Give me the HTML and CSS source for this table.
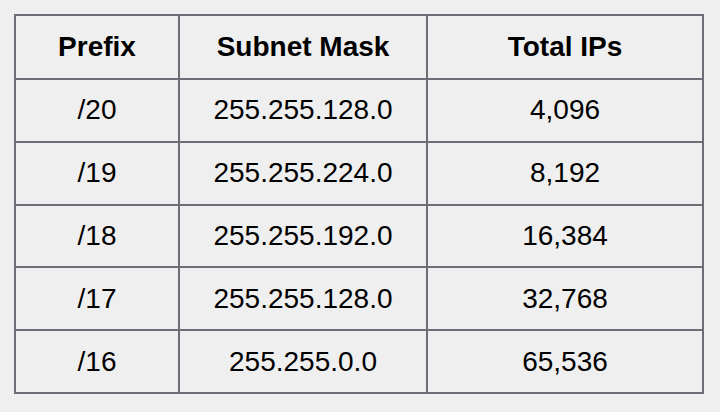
FILE: index.html
```html
<!DOCTYPE html>
<html>
<head>
<meta charset="utf-8">
<link rel="stylesheet" href="styles.css">
</head>
<body>
<table class="subnets">
  <colgroup>
    <col class="c1"><col class="c2"><col class="c3">
  </colgroup>
  <thead>
    <tr class="head"><th>Prefix</th><th>Subnet Mask</th><th>Total IPs</th></tr>
  </thead>
  <tbody>
    <tr><td>/20</td><td>255.255.128.0</td><td>4,096</td></tr>
    <tr><td>/19</td><td>255.255.224.0</td><td>8,192</td></tr>
    <tr><td>/18</td><td>255.255.192.0</td><td>16,384</td></tr>
    <tr><td>/17</td><td>255.255.128.0</td><td>32,768</td></tr>
    <tr><td>/16</td><td>255.255.0.0</td><td>65,536</td></tr>
  </tbody>
</table>
</body>
</html>
```
FILE: styles.css
```css
html, body {
  margin: 0;
  background: #efefef;
}
body {
  padding: 14px 0 0 14px;
  font-family: "Liberation Sans", Arial, sans-serif;
  color: #000;
}
.subnets {
  border-collapse: collapse;
  table-layout: fixed;
  width: 688px;
}
.c1 { width: 164px; }
.c2 { width: 248px; }
.c3 { width: 276px; }
.subnets th,
.subnets td {
  border: 2px solid #6e6e78;
  text-align: center;
  vertical-align: middle;
  font-size: 28px;
  height: 61px;
  padding: 0;
}
.subnets th {
  font-weight: bold;
  height: 62px;
}
.subnets td {
  font-weight: normal;
  height: 60.8px;
}
```
